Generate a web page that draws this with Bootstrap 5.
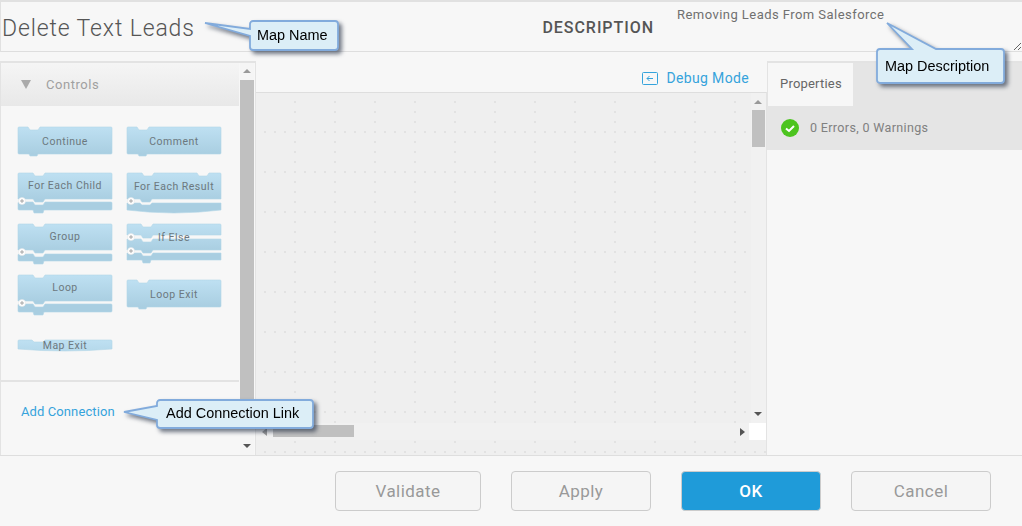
<!DOCTYPE html>
<html lang="en"><head><meta charset="utf-8"><title>Map editor</title>
<link href="https://cdn.jsdelivr.net/npm/bootstrap@5.3.0/dist/css/bootstrap.min.css" rel="stylesheet">
<style>
html,body{height:526px;overflow:hidden}
body{background:#f7f7f7;font-family:Roboto,"Liberation Sans",sans-serif;color:#666;position:relative;width:1022px}
.hdr{height:52px;border:1px solid #e1e1e1;border-top-width:2px;border-right:0;border-bottom-color:#dedede}
.map-name{width:300px;height:49px;border:0;background:transparent;padding:3px 0 0 1px;font-weight:300;font-size:23px;letter-spacing:.87px;color:#555;outline:0}
.desc-lbl{width:370px;text-align:right;padding:0 17px 0 0;font-weight:500;font-size:16px;letter-spacing:.95px;color:#555;margin-top:2px}
.desc-box{width:350px;height:49px;border:0;background:transparent;padding:4px 5px;font-size:13px;line-height:17px;letter-spacing:.45px;color:#707070;outline:0;margin-left:auto}
.work{height:395px;margin-top:9px;border-bottom:1px solid #dedede}
.left-pane{width:256px;border:2px solid #e3e3e3;border-width:2px 1px 0 1px;position:relative;flex:none}
.left-main{width:238px;height:100%;display:flex;flex-direction:column}
.ctl-head{height:43px;background:linear-gradient(#f5f5f5,#e8e8e8);display:flex;align-items:center;padding-left:20px;font-size:13px;letter-spacing:.55px;color:#a0a0a0;flex:none}
.ctl-arrow{width:0;height:0;border:5px solid transparent;border-top:9px solid #aaa;border-bottom:0;margin-right:15px}
.palette{display:grid;grid-template-columns:94px 94px;grid-template-rows:46px 51px 51px 65px 42px;column-gap:15px;padding:21px 0 0 17px;flex:none;height:276px;border-bottom:2px solid #e3e3e3}
.blk{width:94px;position:relative;align-self:start;height:42px}
.blk svg{display:block;overflow:visible}
.blk span{position:absolute;left:0;right:0;text-align:center;font-size:10.5px;line-height:14px;letter-spacing:.5px;color:#6c787e;white-space:nowrap}
.blk-low{margin-top:5px}
.pl-c{fill:#fff;stroke:#e4e4e4;stroke-width:.5}
.pl-x{stroke:#8a8a8a;stroke-width:.7;fill:none}
.add-conn{padding:20px 0 0 20px;font-size:13px;letter-spacing:.1px}
.add-conn a,.dbg{color:#35a3dc;text-decoration:none}
.sb-v{position:absolute;background:#f5f5f5;width:14px}
.sb-thumb{position:absolute;background:#c0c0c0}
.tri{position:absolute;width:0;height:0;border-style:solid;border-color:transparent}
.tri-up{border-width:0 4px 4px;border-bottom-color:#999}
.tri-down{border-width:4px 4px 0;border-top-color:#555}
.tri-left{border-width:4px 5px 4px 0;border-right-color:#999}
.tri-right{border-width:4px 0 4px 5px;border-left-color:#555}
.mid-pane{width:511px;flex:none;display:flex;flex-direction:column}
.dbg-row{height:31px;flex:none;display:flex;align-items:center;justify-content:flex-end;padding:3px 18px 0 0;font-size:14px;letter-spacing:.35px;gap:8px}
.canvas-wrap{flex:1;border-top:1px solid #dedede;border-right:1px solid #e3e3e3;position:relative;background-color:#efefef;background-image:url("data:image/svg+xml,%3Csvg xmlns='http://www.w3.org/2000/svg' width='40' height='40'%3E%3Cg fill='%23e2e2e2'%3E%3Crect x='38' y='8' width='2' height='2'/%3E%3Crect x='38' y='18' width='2' height='2'/%3E%3Crect x='38' y='28' width='2' height='2'/%3E%3Crect x='38' y='38' width='2' height='2'/%3E%3Crect x='8' y='38' width='2' height='2'/%3E%3Crect x='18' y='38' width='2' height='2'/%3E%3Crect x='28' y='38' width='2' height='2'/%3E%3C/g%3E%3C/svg%3E")}
.cv-v{position:absolute;right:0;top:0;width:15px;height:330px;background:#f1f1f1}
.cv-h{position:absolute;left:0;right:16px;top:330px;height:17px;background:#f1f1f1}
.cv-c{position:absolute;right:0;top:330px;width:17px;height:17px;background:#fff}
.right-pane{flex:1;display:flex;flex-direction:column;border-top:2px solid #e3e3e3}
.tab-bar{height:43px;background:#e5e5e5;flex:none}
.tab-on{width:86px;height:43px;background:#f7f7f7;border-left:1px solid #e3e3e3;display:flex;align-items:center;padding:0 0 2px 12px;font-size:13px;letter-spacing:.2px;color:#666}
.status{height:44px;background:#e5e5e5;display:flex;align-items:center;padding-left:14px;gap:11px;font-size:12.5px;letter-spacing:.35px;color:#808080}
.ftr{height:70px;display:flex;align-items:flex-start;padding:15px 0 0 335px;gap:30px}
.act{height:40px;font-size:17px;font-weight:400;letter-spacing:.45px;border-radius:4px;background:#f5f5f5;border:1px solid #ccc;color:#999;padding:1px 0 0}
.act:disabled{background:#f5f5f5;border-color:#ccc;color:#999;opacity:1}
.act-ok,.act-ok:hover{background:#1f9bd9;color:#fff;font-weight:500}
.w146{width:146px}.w140{width:140px}
.note{position:absolute;filter:drop-shadow(3px 3px 2px rgba(40,50,70,.65));pointer-events:none}
.note svg{display:block;overflow:visible}
.note span{position:absolute;font-family:"Liberation Sans",Arial,sans-serif;font-size:14.45px;line-height:16px;color:#000;white-space:nowrap}
</style></head>
<body>
<svg width="0" height="0" class="d-block position-absolute"><defs>
<linearGradient id="bg2" gradientUnits="userSpaceOnUse" x1="0" y1="0" x2="0" y2="27"><stop offset="0" stop-color="#bee0f2"/><stop offset="1" stop-color="#a9cee1"/></linearGradient>
</defs></svg>

<div class="hdr d-flex align-items-center">
  <input class="map-name" value="Delete Text Leads" aria-label="Map name">
  <div class="desc-lbl">DESCRIPTION</div>
  <textarea class="desc-box" aria-label="Description">Removing Leads From Salesforce</textarea>
</div>

<div class="work d-flex">
  <div class="left-pane">
    <div class="left-main">
      <div class="ctl-head"><i class="ctl-arrow"></i>Controls</div>
      <div class="palette">
        <div class="blk"><svg width="94" height="29" fill="url(#bg2)" stroke="#b4d6e8" stroke-width=".6"><path d="M1 0H10l2 3H20l2-3H93a1 1 0 0 1 1 1V26a1 1 0 0 1-1 1H20l-1 2H12l-1-2H1a1 1 0 0 1-1-1V1a1 1 0 0 1 1-1Z"/></svg><span style="top:8px">Continue</span></div>
        <div class="blk"><svg width="94" height="29" fill="url(#bg2)" stroke="#b4d6e8" stroke-width=".6"><path d="M1 0H10l2 3H20l2-3H93a1 1 0 0 1 1 1V26a1 1 0 0 1-1 1H20l-1 2H12l-1-2H1a1 1 0 0 1-1-1V1a1 1 0 0 1 1-1Z"/></svg><span style="top:8px">Comment</span></div>

        <div class="blk"><svg width="94" height="40" fill="url(#bg2)" stroke="#b4d6e8" stroke-width=".6"><path d="M1 0H15l2 3H25l2-3H93a1 1 0 0 1 1 1V26H27l-2 3H17l-2-3H0V1a1 1 0 0 1 1-1Z"/><path fill="#a9cee1" d="M1 29H15l2 3H25l2-3H93a1 1 0 0 1 1 1V36a1 1 0 0 1-1 1H26l-1 3H16l-1-3H1a1 1 0 0 1-1-1V30a1 1 0 0 1 1-1Z"/><circle class="pl-c" cx="4" cy="28" r="3.5"/><path class="pl-x" d="M2 28h4M4 26v4"/></svg><span style="top:6px">For Each Child</span></div>
        <div class="blk"><svg width="94" height="40" fill="url(#bg2)" stroke="#b4d6e8" stroke-width=".6"><path d="M1 0H15l2 3H25l2-3H70l2 3H80l2-3H93a1 1 0 0 1 1 1V26H25l-2 3H15l-2-3H0V1a1 1 0 0 1 1-1Z"/><path fill="#a9cee1" d="M0 30H13l2 2H23l2-2H94V37Q47 43 0 37Z"/><circle class="pl-c" cx="4" cy="28" r="3.5"/><path class="pl-x" d="M2 28h4M4 26v4"/></svg><span style="top:7px">For Each Result</span></div>

        <div class="blk"><svg width="94" height="40" fill="url(#bg2)" stroke="#b4d6e8" stroke-width=".6"><path d="M1 0H15l2 3H25l2-3H93a1 1 0 0 1 1 1V26H27l-2 3H17l-2-3H0V1a1 1 0 0 1 1-1Z"/><path fill="#a9cee1" d="M1 30H15l2 3H25l2-3H93a1 1 0 0 1 1 1V36a1 1 0 0 1-1 1H26l-1 3H16l-1-3H1a1 1 0 0 1-1-1V31a1 1 0 0 1 1-1Z"/><circle class="pl-c" cx="4" cy="28" r="3.5"/><path class="pl-x" d="M2 28h4M4 26v4"/></svg><span style="top:6px">Group</span></div>
        <div class="blk"><svg width="94" height="40" fill="url(#bg2)" stroke="#b4d6e8" stroke-width=".6"><path d="M1 0H14l2 3H24l2-3H93a1 1 0 0 1 1 1V11H26l-2 3H16l-2-3H0V1a1 1 0 0 1 1-1Z"/><path d="M0 15H14l2 3H24l2-3H94V26H26l-2 3H16l-2-3H0Z"/><path fill="#a9cee1" d="M0 29H14l2 3H24l2-3H94V36H24l-1 3H16l-1-3H0Z"/><circle class="pl-c" cx="4" cy="13" r="3.5"/><path class="pl-x" d="M2 13h4M4 11v4"/><circle class="pl-c" cx="4" cy="27" r="3.5"/><path class="pl-x" d="M2 27h4M4 25v4"/></svg><span style="top:7px">If Else</span></div>

        <div class="blk"><svg width="94" height="40" fill="url(#bg2)" stroke="#b4d6e8" stroke-width=".6"><path d="M1 0H15l2 3H25l2-3H93a1 1 0 0 1 1 1V26H27l-2 3H17l-2-3H0V1a1 1 0 0 1 1-1Z"/><path fill="#a9cee1" d="M1 29H15l2 3H25l2-3H93a1 1 0 0 1 1 1V36a1 1 0 0 1-1 1H26l-1 3H16l-1-3H1a1 1 0 0 1-1-1V30a1 1 0 0 1 1-1Z"/><circle class="pl-c" cx="4" cy="28" r="3.5"/><path class="pl-x" d="M2 28h4M4 26v4"/></svg><span style="top:6px">Loop</span></div>
        <div class="blk blk-low"><svg width="94" height="29" fill="url(#bg2)" stroke="#b4d6e8" stroke-width=".6"><path d="M1 0H10l2 3H20l2-3H93a1 1 0 0 1 1 1V26a1 1 0 0 1-1 1H20l-1 2H12l-1-2H1a1 1 0 0 1-1-1V1a1 1 0 0 1 1-1Z"/></svg><span style="top:8px">Loop Exit</span></div>

        <div class="blk"><svg width="94" height="12" fill="url(#bg2)" stroke="#b4d6e8" stroke-width=".6"><path d="M1 0H14l2 2H25l2-2H93a1 1 0 0 1 1 1V9Q47 13 0 9V1a1 1 0 0 1 1-1Z"/></svg><span style="top:-1px">Map Exit</span></div>
      </div>
      <div class="add-conn"><a href="#">Add Connection</a></div>
    </div>
    <div class="sb-v" style="left:239px;top:0;bottom:0"></div>
    <i class="tri tri-up" style="left:242px;top:6px"></i>
    <div class="sb-thumb" style="left:239px;top:17px;width:14px;height:346px"></div>
    <i class="tri tri-down" style="left:242px;top:381px"></i>
  </div>
  <div class="mid-pane">
    <div class="dbg-row">
      <svg width="16" height="13" fill="none" stroke="#35a3dc"><rect x=".5" y=".5" width="15" height="12" rx="1"/><path d="M11 6.5H5M7.5 4L5 6.5 7.5 9"/></svg>
      <a class="dbg" href="#">Debug Mode</a>
    </div>
    <div class="canvas-wrap">
      <div class="cv-v"></div>
      <div class="sb-thumb" style="right:1px;top:17px;width:13px;height:37px"></div>
      <i class="tri tri-up" style="right:4px;top:7px"></i>
      <i class="tri tri-down" style="right:4px;top:319px"></i>
      <div class="cv-h"></div>
      <div class="sb-thumb" style="left:17px;top:332px;width:81px;height:12px"></div>
      <i class="tri tri-left" style="left:6px;top:335px"></i>
      <i class="tri tri-right" style="left:484px;top:335px"></i>
      <div class="cv-c"></div>
    </div>
  </div>
  <div class="right-pane">
    <div class="tab-bar"><div class="tab-on">Properties</div></div>
    <div class="status">
      <svg width="18" height="18"><circle cx="9" cy="9" r="9" fill="#4cc41f"/><path d="M5 9.5l3 2.5 5-5" fill="none" stroke="#fff" stroke-width="2"/></svg>
      <span>0 Errors, 0 Warnings</span>
    </div>
  </div>
</div>

<div class="ftr">
  <button class="btn act w146" disabled>Validate</button>
  <button class="btn act w140" disabled>Apply</button>
  <button class="btn act act-ok w140">OK</button>
  <button class="btn act w140">Cancel</button>
</div>

<div class="note" style="left:205px;top:21px"><svg width="134" height="30"><path d="M0 2L45 8V3a3 3 0 0 1 3-3H130a3 3 0 0 1 3 3V26a3 3 0 0 1-3 3H48a3 3 0 0 1-3-3V15Z" fill="#dceef7" stroke="#82abdc" stroke-width="1.8"/></svg><span style="left:52px;top:6px">Map Name</span></div>
<div class="note" style="left:877px;top:23px"><svg width="128" height="60"><path d="M10 0L59 26H124a3 3 0 0 1 3 3V57a3 3 0 0 1-3 3H3a3 3 0 0 1-3-3V29a3 3 0 0 1 3-3H35Z" fill="#dceef7" stroke="#82abdc" stroke-width="1.8"/></svg><span style="left:8px;top:35px">Map Description</span></div>
<div class="note" style="left:124px;top:400px"><svg width="190" height="29"><path d="M0 12L33 6V3a3 3 0 0 1 3-3H186a3 3 0 0 1 3 3V25a3 3 0 0 1-3 3H36a3 3 0 0 1-3-3V20Z" fill="#dceef7" stroke="#82abdc" stroke-width="1.8"/></svg><span style="left:42px;top:5px">Add Connection Link</span></div>

<script src="https://cdn.jsdelivr.net/npm/bootstrap@5.3.0/dist/js/bootstrap.bundle.min.js"></script>
</body></html>
